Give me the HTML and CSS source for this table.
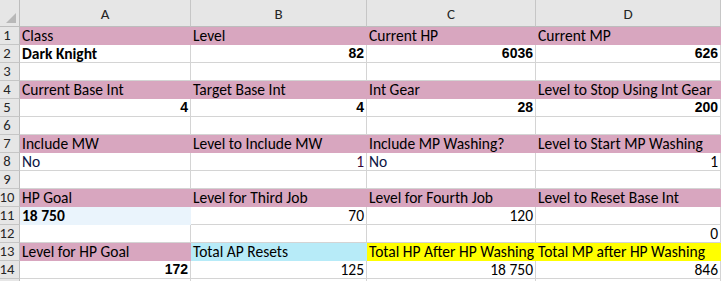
FILE: index.html
```html
<!DOCTYPE html>
<html>
<head>
<meta charset="utf-8">
<link rel="stylesheet" href="styles.css">
</head>
<body>
<div class="sheet">
  <div class="corner"><svg width="20" height="27" viewBox="0 0 20 27"><polygon points="16,13 16,23 6,23" fill="#b8b8b8"/></svg></div>
  <div class="colh">A</div><div class="colh">B</div><div class="colh">C</div><div class="colh last">D</div>

  <div class="rowh">1</div>
  <div class="c pink">Class</div><div class="c pink">Level</div><div class="c pink">Current HP</div><div class="c pink">Current MP</div>

  <div class="rowh">2</div>
  <div class="c b">Dark Knight</div><div class="c num nb">82</div><div class="c num nb">6036</div><div class="c num nb">626</div>

  <div class="rowh">3</div>
  <div class="c"></div><div class="c"></div><div class="c"></div><div class="c"></div>

  <div class="rowh">4</div>
  <div class="c pink">Current Base Int</div><div class="c pink">Target Base Int</div><div class="c pink">Int Gear</div><div class="c pink">Level to Stop Using Int Gear</div>

  <div class="rowh">5</div>
  <div class="c num nb">4</div><div class="c num nb">4</div><div class="c num nb">28</div><div class="c num nb">200</div>

  <div class="rowh">6</div>
  <div class="c"></div><div class="c"></div><div class="c"></div><div class="c"></div>

  <div class="rowh">7</div>
  <div class="c pink">Include MW</div><div class="c pink">Level to Include MW</div><div class="c pink">Include MP Washing?</div><div class="c pink">Level to Start MP Washing</div>

  <div class="rowh">8</div>
  <div class="c navy">No</div><div class="c num purple">1</div><div class="c navy">No</div><div class="c num">1</div>

  <div class="rowh">9</div>
  <div class="c"></div><div class="c"></div><div class="c"></div><div class="c"></div>

  <div class="rowh">10</div>
  <div class="c pink">HP Goal</div><div class="c pink">Level for Third Job</div><div class="c pink">Level for Fourth Job</div><div class="c pink">Level to Reset Base Int</div>

  <div class="rowh">11</div>
  <div class="c b ice">18 750</div><div class="c num">70</div><div class="c num">120</div><div class="c"></div>

  <div class="rowh">12</div>
  <div class="c"></div><div class="c"></div><div class="c"></div><div class="c num">0</div>

  <div class="rowh">13</div>
  <div class="c pink">Level for HP Goal</div><div class="c sky">Total AP Resets</div><div class="c yellow">Total HP After HP Washing</div><div class="c yellow">Total MP after HP Washing</div>

  <div class="rowh">14</div>
  <div class="c num nb">172</div><div class="c num">125</div><div class="c num">18 750</div><div class="c num">846</div>

  <div class="rowh"></div>
  <div class="c"></div><div class="c"></div><div class="c"></div><div class="c"></div>
</div>
</body>
</html>
```

FILE: styles.css
```css
html, body {
  margin: 0;
  padding: 0;
  background: #ffffff;
  overflow: hidden;
}

.sheet {
  display: grid;
  grid-template-columns: 20px 171px 176px 169px 185px;
  grid-template-rows: 27px repeat(15, 18px);
  width: 721px;
  height: 281px;
  overflow: hidden;
  font-family: Carlito, Calibri, Lato, "Liberation Sans", sans-serif;
  font-size: 15.5px;
  color: #000;
}

.corner {
  background: #e6e6e6;
  border-right: 1px solid #bdbdbd;
  border-bottom: 1px solid #bdbdbd;
  box-sizing: border-box;
}
.corner svg { display: block; }

.colh {
  background: #e6e6e6;
  border-right: 1px solid #c6c6c6;
  border-bottom: 1px solid #bdbdbd;
  box-sizing: border-box;
  display: flex;
  align-items: flex-end;
  justify-content: center;
  padding-bottom: 3px;
  color: #262626;
  line-height: 18px;
  font-size: 15px;
}

.rowh {
  background: #e6e6e6;
  border-right: 1px solid #bdbdbd;
  border-bottom: 1px solid #c6c6c6;
  box-sizing: border-box;
  display: flex;
  align-items: flex-end;
  justify-content: center;
  padding-right: 5px;
  color: #262626;
  line-height: 17px;
  font-size: 14.67px;
}

.c {
  border-right: 1px solid #d4d4d4;
  border-bottom: 1px solid #d4d4d4;
  box-sizing: border-box;
  display: flex;
  align-items: flex-end;
  padding: 0 2px 0 2px;
  white-space: nowrap;
  line-height: 17px;
  overflow: visible;
}

.num { justify-content: flex-end; }
.b { font-weight: bold; }
.nb {
  font-family: "Liberation Sans", Arial, sans-serif;
  font-weight: bold;
  font-size: 14px;
}

.pink { background: #d8a6bf; border-color: #d8a6bf; }
.ice { background: #eaf4fc; border-color: #eaf4fc; }
.sky { background: #b7ebf8; border-color: #b7ebf8; }
.yellow { background: #ffff00; border-color: #ffff00; }

.navy { color: #0c1445; }
.purple { color: #3a0a3a; }
```
